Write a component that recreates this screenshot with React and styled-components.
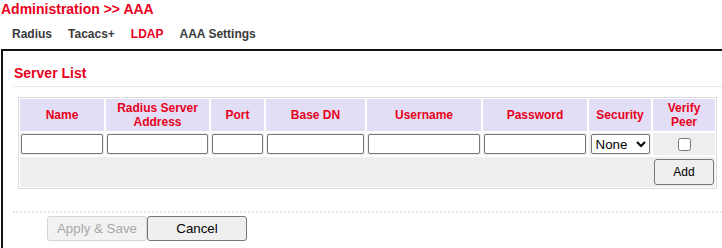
import React from "react";
import styled, { createGlobalStyle } from "styled-components";

const Global = createGlobalStyle`
  html, body { margin: 0; padding: 0; background: #fff; }
  body { font-family: "Liberation Sans", Arial, sans-serif; overflow: hidden; }
`;

const RED = "#e8001c";

const Page = styled.div`
  width: 722px;
  height: 248px;
  overflow: hidden;
`;

const Title = styled.h1`
  margin: 0;
  padding: 0 0 0 1px;
  font-size: 14px;
  font-weight: bold;
  line-height: 18px;
  color: ${RED};
`;

const Tabs = styled.div`
  display: flex;
  margin: 9px 0 0 4px;
  height: 22px;
`;

const Tab = styled.span`
  font-size: 12px;
  font-weight: bold;
  line-height: 14px;
  padding: 0 8px;
  color: ${(p) => (p.$active ? RED : "#3a3a3a")};
`;

const Panel = styled.div`
  margin-left: 1px;
  border-top: 2px solid #111;
  border-left: 2px solid #111;
  padding-left: 10px;
  height: 200px;
`;

const SectionHead = styled.h2`
  margin: 14px 0 0 0;
  padding: 0 0 5px 1px;
  font-size: 14px;
  font-weight: bold;
  line-height: 16px;
  color: ${RED};
  border-bottom: 1px solid #e8e8e8;
`;

const Table = styled.table`
  margin: 10px 0 0 5px;
  width: 699px;
  table-layout: fixed;
  border-collapse: separate;
  border-spacing: 0;
  border: 1px solid #dcdcdc;
  background: #fff;
`;

const Th = styled.th`
  background: #e2def5;
  border: 1px solid #fff;
  color: ${RED};
  font-size: 12px;
  font-weight: bold;
  line-height: 14px;
  height: 32px;
  padding: 0 2px;
  text-align: center;
  vertical-align: middle;
`;

const Td = styled.td`
  background: #eeeeee;
  border: 1px solid #fff;
  height: 22px;
  padding: 0 1px;
  text-align: center;
  vertical-align: middle;
`;

const AddCell = styled.td`
  background: #eeeeee;
  border: 1px solid #fff;
  height: 30px;
  padding: 0 1px 0 0;
  text-align: right;
  vertical-align: middle;
`;

const TextInput = styled.input`
  box-sizing: border-box;
  width: 100%;
  height: 20px;
  margin: 0;
  padding: 1px 2px;
  border: 1px solid #767676;
  border-radius: 2px;
  background: #fff;
  font-size: 13px;
  display: block;
`;

const Select = styled.select`
  box-sizing: border-box;
  width: 59px;
  height: 20px;
  margin: 0 auto;
  border: 1px solid #767676;
  border-radius: 2px;
  background: #fff;
  color: #000;
  font-family: "Liberation Sans", Arial, sans-serif;
  font-size: 13.33px;
  display: block;
`;

const Check = styled.input`
  width: 13px;
  height: 13px;
  margin: 0;
  vertical-align: middle;
`;

const SmallButton = styled.button`
  box-sizing: border-box;
  width: 60px;
  height: 26px;
  font-family: "Liberation Sans", Arial, sans-serif;
  font-size: 12px;
  color: #000;
  background: #efefef;
  border: 1px solid #767676;
  border-radius: 3px;
  padding: 0;
`;

const Divider = styled.div`
  margin-top: 22px;
  border-top: 2px dotted #e6e6e6;
`;

const ButtonRow = styled.div`
  display: flex;
  margin: 3px 0 0 34px;
`;

const FormButton = styled.button`
  box-sizing: border-box;
  width: ${(p) => p.$w}px;
  height: 25px;
  padding: 0;
  font-family: "Liberation Sans", Arial, sans-serif;
  font-size: 13.33px;
  border-radius: 3px;
  color: ${(p) => (p.disabled ? "#a8a8a8" : "#000")};
  background: ${(p) => (p.disabled ? "#f2f2f2" : "#efefef")};
  border: 1px solid ${(p) => (p.disabled ? "#d4d4d4" : "#767676")};
`;

const columns = [
  { label: "Name", w: 86 },
  { label: ["Radius Server", "Address"], w: 105 },
  { label: "Port", w: 55 },
  { label: "Base DN", w: 101 },
  { label: "Username", w: 116 },
  { label: "Password", w: 106 },
  { label: "Security", w: 64 },
  { label: ["Verify", "Peer"], w: 64 },
];

export default function App() {
  return (
    <Page>
      <Global />
      <Title>Administration &gt;&gt; AAA</Title>
      <Tabs>
        <Tab>Radius</Tab>
        <Tab>Tacacs+</Tab>
        <Tab $active>LDAP</Tab>
        <Tab>AAA Settings</Tab>
      </Tabs>
      <Panel>
        <SectionHead>Server List</SectionHead>
        <Table>
          <colgroup>
            {columns.map((c, i) => (
              <col key={i} style={{ width: c.w }} />
            ))}
          </colgroup>
          <thead>
            <tr>
              {columns.map((c, i) => (
                <Th key={i}>
                  {Array.isArray(c.label) ? (
                    <>
                      {c.label[0]}
                      <br />
                      {c.label[1]}
                    </>
                  ) : (
                    c.label
                  )}
                </Th>
              ))}
            </tr>
          </thead>
          <tbody>
            <tr>
              {[0, 1, 2, 3, 4, 5].map((i) => (
                <Td key={i}>
                  <TextInput type={i === 5 ? "password" : "text"} />
                </Td>
              ))}
              <Td>
                <Select defaultValue="None">
                  <option>None</option>
                  <option>SSL</option>
                  <option>TLS</option>
                </Select>
              </Td>
              <Td>
                <Check type="checkbox" />
              </Td>
            </tr>
            <tr>
              <AddCell colSpan={8}>
                <SmallButton>Add</SmallButton>
              </AddCell>
            </tr>
          </tbody>
        </Table>
        <Divider />
        <ButtonRow>
          <FormButton $w={100} disabled>
            Apply &amp; Save
          </FormButton>
          <FormButton $w={100}>Cancel</FormButton>
        </ButtonRow>
      </Panel>
    </Page>
  );
}
